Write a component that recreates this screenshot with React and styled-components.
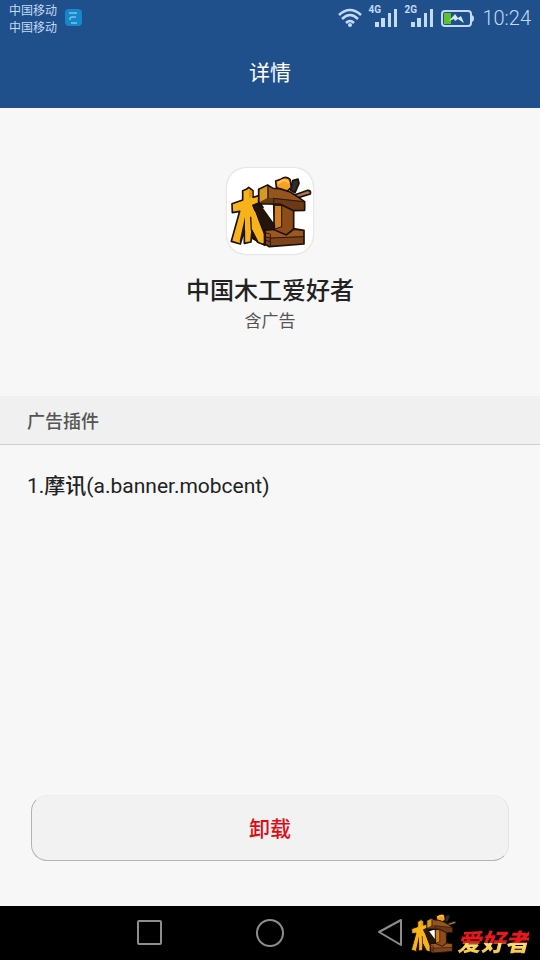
import React from "react";
import styled, { createGlobalStyle } from "styled-components";

const GlobalStyle = createGlobalStyle`
  * {
    box-sizing: border-box;
  }
  body {
    margin: 0;
    background: #f7f7f7;
    color: #222222;
    font-family: Roboto, "Noto Sans CJK SC", sans-serif;
  }
  h1, h2, p, ul {
    margin: 0;
    padding: 0;
    font-weight: 400;
  }
`;

const Screen = styled.div`
  display: flex;
  flex-direction: column;
  min-height: 100vh;
`;

const Header = styled.header`
  background: #1f508b;
`;

const StatusBar = styled.div`
  display: flex;
  align-items: center;
  height: 36px;
  padding: 0 9px;
  color: #c3daf8;
`;

const Carriers = styled.div`
  display: flex;
  flex-direction: column;
  padding-top: 4px;
  font-size: 12px;
  line-height: 17px;
`;

const AppBadge = styled.svg`
  width: 18px;
  height: 18px;
  margin-left: 8px;
`;

const StatusIcons = styled.div`
  display: flex;
  align-items: center;
  gap: 6px;
  margin-left: auto;
`;

const StatusIcon = styled.svg`
  display: block;
  height: 24px;
  width: ${(props) => props.$width}px;
`;

const Signal = styled.div`
  position: relative;
  width: 30px;
  height: 24px;
`;

const SignalType = styled.span`
  position: absolute;
  top: -1px;
  left: 0;
  font-size: 10px;
  line-height: 10px;
  font-weight: 700;
`;

const Clock = styled.time`
  margin-left: 2px;
  font-size: 20px;
  line-height: 24px;
  font-weight: 300;
`;

const Title = styled.h1`
  display: flex;
  align-items: center;
  justify-content: center;
  height: 72px;
  padding-top: 2px;
  color: #ffffff;
  font-size: 21px;
  line-height: 30px;
`;

const Main = styled.main`
  display: flex;
  flex: 1;
  flex-direction: column;
`;

const AppInfo = styled.section`
  display: flex;
  flex-direction: column;
  align-items: center;
  padding: 60px 24px;
`;

const AppIcon = styled.div`
  display: flex;
  width: 86px;
  height: 86px;
  border-radius: 19px;
  overflow: hidden;
  background: #ffffff;
  box-shadow: 0 0 2px #c4b8aa;
`;

const AppName = styled.h2`
  margin-top: 19px;
  font-size: 24px;
  line-height: 36px;
  font-weight: 500;
`;

const AppNote = styled.p`
  padding-bottom: 3px;
  color: #555555;
  font-size: 17px;
  line-height: 24px;
`;

const SectionTitle = styled.h2`
  padding: 12px 27px 8px;
  border-bottom: 1px solid #d0d0d0;
  background: #f0f0f0;
  color: #555555;
  font-size: 18px;
  line-height: 28px;
  font-weight: 500;
`;

const PluginList = styled.ul`
  flex: 1;
  padding: 26px 27px;
  list-style: none;
`;

const PluginItem = styled.li`
  font-size: 21px;
  line-height: 30px;
`;

const PluginName = styled.span`
  font-weight: 500;
`;

const Actions = styled.div`
  padding: 0 31px 45px;
`;

const UninstallButton = styled.button`
  display: block;
  width: 100%;
  height: 66px;
  padding: 0 0 2px;
  border: 1px solid #b4b4b4;
  border-top-color: #ececec;
  border-right-color: #e4e4e4;
  border-radius: 16px;
  background: #f2f2f2;
  color: #e00a14;
  font-family: inherit;
  font-size: 21px;
  font-weight: 500;
`;

const NavBar = styled.nav`
  position: relative;
  display: flex;
  justify-content: center;
  height: 54px;
  background: #000000;
`;

const NavButton = styled.button`
  display: flex;
  align-items: center;
  justify-content: center;
  width: 120px;
  padding: 0;
  border: 0;
  background: none;
`;

const Watermark = styled.div`
  position: absolute;
  right: 11px;
  bottom: 4px;
  display: flex;
  align-items: flex-end;
  pointer-events: none;
`;

const WatermarkText = styled.span`
  background: linear-gradient(#e8181c 0 48%, #ffe070 52%, #f6ba3c);
  background-clip: text;
  color: transparent;
  font-size: 24px;
  line-height: 26px;
  font-style: italic;
  font-weight: 900;
`;

const Logo = ({ size, viewBox }) => (
  <svg width={size} height={size} viewBox={viewBox} aria-hidden="true">
    <g stroke="#1c1109" strokeWidth="5" strokeLinejoin="round">
      <path d="M226 106 L233 78 L249 73 L252 86 L240 114 Z" fill="#2b2d31" />
      <path d="M232 123 L278 107 Q289 107 286 118 L240 132 Z" fill="#a87650" />
      <path
        d="M184 97 L182 79 L199 73 Q212 63 225 74 L229 98 L216 110 L192 104 Z"
        fill="#f6a01d"
      />
      {/* base beam */}
      <path d="M150 226 L178 222 L235 222 L267 227 V268 L163 276 L150 268 Z" fill="#7d431a" />
      {/* column */}
      <path d="M176 148 H236 V223 L214 241 L178 226 Z" fill="#8c4b19" />
      <path d="M178 152 H200 V216 L178 224 Z" fill="#d17e20" strokeWidth="3" />
      {/* top beam */}
      <path d="M131 104 L158 91 L174 101 L194 102 L226 112 L269 141 V167 L236 168 L196 149 L160 148 L131 148 Z" fill="#6b3915" />
      {/* dark side of the front character */}
      <path d="M112 150 L138 149 L178 210 V224 L150 226 V272 L110 250 Z" fill="#24150b" />
      {/* front character */}
      <path
        d="M51 147 L83 136 V108 L94 104 L101 98 L114 108 V128 L131 123 V145 L114 152 L148 236 V270 L128 263 L111 226 L108 262 L88 266 V226 L76 268 L49 260 L74 170 L52 174 Z"
        fill="#f8b31a"
      />
    </g>
    <path d="M144 160 L170 152 L174 156 V202 Z" fill="#ffffff" />
    <path d="M134 105 L157 94 V130 L134 142 Z" fill="#d49b20" />
    <path d="M161 96 L174 104 L194 105 L225 115 L262 139 L172 129 L161 130 Z" fill="#97551e" />
    <path d="M102 105 L112 110 V128 L102 131 Z" fill="#dc9616" />
    <path d="M90 186 L90 226 L78 262 L74 260 Z" fill="#24150b" />
    <path d="M107 168 L112 224 L130 260 L145 266 V240 L120 170 Z" fill="#f8b31a" />
    <path d="M107 186 L109 226 L129 262" stroke="#24150b" strokeWidth="4" fill="none" />
    <path d="M153 229 L178 228 L214 244 L236 228 L264 230 V245 L165 250 L153 246 Z" fill="#9b5821" />
    <path
      d="M151 235 L164 237 M151 246 L166 250 M151 257 L166 261 M166 238 V273 M167 250 L266 246 M159 94 V132 M176 132 V150 M174 131 L266 141"
      stroke="#2b160a"
      strokeWidth="3"
      fill="none"
    />
    <path d="M189 86 L202 77 L215 78 L222 86" stroke="#ffc454" strokeWidth="6" fill="none" />
  </svg>
);

const SignalIndicator = ({ type }) => (
  <Signal>
    <SignalType>{type}</SignalType>
    <StatusIcon $width={30} viewBox="0 0 30 24" fill="#c3daf8" aria-hidden="true">
      <rect x="7" y="16" width="4" height="5" />
      <rect x="13" y="12" width="4" height="9" />
      <rect x="20" y="7" width="3" height="14" />
      <rect x="26" y="3" width="3" height="18" />
    </StatusIcon>
  </Signal>
);

const App = () => {
  return (
    <Screen>
      <GlobalStyle />
      <Header>
        <StatusBar>
          <Carriers>
            <span>中国移动</span>
            <span>中国移动</span>
          </Carriers>
          <AppBadge viewBox="0 0 18 18" aria-hidden="true">
            <rect x="0" y="0" width="17" height="17" rx="4" fill="#1787cb" />
            <path
              d="M4 4 H12 M5 11 V9 Q5 8 7 8 H11 M6 14 H12"
              stroke="#b5def7"
              fill="none"
            />
          </AppBadge>
          <StatusIcons>
            <StatusIcon
              $width={24}
              viewBox="0 0 24 24"
              fill="none"
              stroke="#c3daf8"
              strokeWidth="2.5"
              aria-hidden="true"
            >
              <path d="M1 9 Q12 -1 23 9 M4 13 Q12 5 20 13 M8 17 Q12 13 16 17" />
              <circle cx="12" cy="19" r="2" fill="#c3daf8" stroke="none" />
            </StatusIcon>
            <SignalIndicator type="4G" />
            <SignalIndicator type="2G" />
            <StatusIcon $width={34} viewBox="0 0 34 24" aria-hidden="true">
              <rect x="2" y="5" width="29" height="15" rx="3" fill="none" stroke="#c3daf8" strokeWidth="2" />
              <path d="M31 9 Q34 9 34 12.5 Q34 16 31 16 Z" fill="#c3daf8" />
              <rect x="4" y="7" width="7" height="11" fill="#5cc326" />
              <path d="M9 15 L15 8 L18 12 L21 10 L24 17 L18 13 L15 15 L14 13 Z" fill="#d6e7fb" />
            </StatusIcon>
            <Clock>10:24</Clock>
          </StatusIcons>
        </StatusBar>
        <Title>详情</Title>
      </Header>
      <Main>
        <AppInfo>
          <AppIcon>
            <Logo size={86} viewBox="36 40 258 258" />
          </AppIcon>
          <AppName>中国木工爱好者</AppName>
          <AppNote>含广告</AppNote>
        </AppInfo>
        <SectionTitle>广告插件</SectionTitle>
        <PluginList>
          <PluginItem>
            1.<PluginName>摩讯</PluginName>(a.banner.mobcent)
          </PluginItem>
        </PluginList>
        <Actions>
          <UninstallButton type="button">卸载</UninstallButton>
        </Actions>
      </Main>
      <NavBar>
        <NavButton type="button" aria-label="最近任务">
          <svg width="30" height="30" fill="none" stroke="#8d8d8d" strokeWidth="2">
            <rect x="3" y="3" width="23" height="23" rx="1" />
          </svg>
        </NavButton>
        <NavButton type="button" aria-label="主屏幕">
          <svg width="30" height="30" fill="none" stroke="#8d8d8d" strokeWidth="2">
            <circle cx="15" cy="15" r="13" />
          </svg>
        </NavButton>
        <NavButton type="button" aria-label="返回">
          <svg width="30" height="30" fill="none" stroke="#8d8d8d" strokeWidth="2" strokeLinejoin="round">
            <path d="M4 14 L26 2 V27 Z" />
          </svg>
        </NavButton>
        <Watermark>
          <Logo size={47} viewBox="42 42 250 250" />
          <WatermarkText>爱好者</WatermarkText>
        </Watermark>
      </NavBar>
    </Screen>
  );
};

export default App;
